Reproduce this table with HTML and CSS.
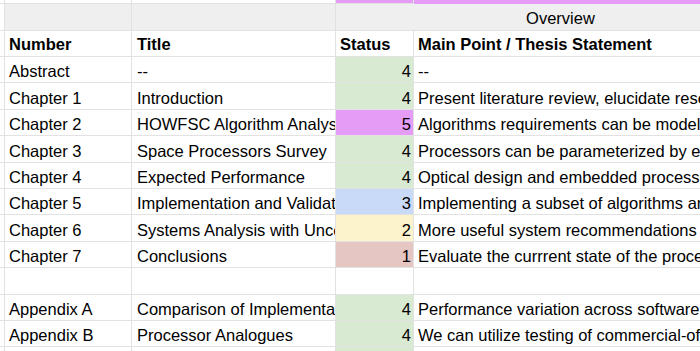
FILE: index.html
```html
<!DOCTYPE html>
<html>
<head>
<meta charset="utf-8">
<link rel="stylesheet" href="styles.css">
</head>
<body>
<div class="sheet">
  <div class="c edge r-top"></div><div class="c r-top"></div><div class="c r-top"></div><div class="c r-top purple"></div><div class="c r-top purple title-top"><span>Dissertation Chapter Summary</span></div>

  <div class="c edge"></div><div class="c band"></div><div class="c band"></div><div class="c band overview">Overview</div>

  <div class="c edge"></div><div class="c b">Number</div><div class="c b">Title</div><div class="c b">Status</div><div class="c b">Main Point / Thesis Statement</div>

  <div class="c edge"></div><div class="c">Abstract</div><div class="c">--</div><div class="c num green">4</div><div class="c">--</div>
  <div class="c edge"></div><div class="c">Chapter 1</div><div class="c">Introduction</div><div class="c num green">4</div><div class="c">Present literature review, elucidate research questions and motivation</div>
  <div class="c edge"></div><div class="c">Chapter 2</div><div class="c">HOWFSC Algorithm Analysis</div><div class="c num purple">5</div><div class="c">Algorithms requirements can be modeled and quantified</div>
  <div class="c edge"></div><div class="c">Chapter 3</div><div class="c">Space Processors Survey</div><div class="c num green">4</div><div class="c">Processors can be parameterized by efficiency and throughput</div>
  <div class="c edge"></div><div class="c">Chapter 4</div><div class="c">Expected Performance</div><div class="c num green">4</div><div class="c">Optical design and embedded processors drive performance</div>
  <div class="c edge"></div><div class="c">Chapter 5</div><div class="c">Implementation and Validation</div><div class="c num blue">3</div><div class="c">Implementing a subset of algorithms and validating models</div>
  <div class="c edge"></div><div class="c">Chapter 6</div><div class="c">Systems Analysis with Uncertainty</div><div class="c num yellow">2</div><div class="c">More useful system recommendations with uncertainty</div>
  <div class="c edge"></div><div class="c">Chapter 7</div><div class="c">Conclusions</div><div class="c num red">1</div><div class="c">Evaluate the currrent state of the processor landscape</div>
  <div class="c edge"></div><div class="c"></div><div class="c"></div><div class="c"></div><div class="c"></div>
  <div class="c edge"></div><div class="c">Appendix A</div><div class="c">Comparison of Implementations</div><div class="c num green">4</div><div class="c">Performance variation across software implementations</div>
  <div class="c edge"></div><div class="c">Appendix B</div><div class="c">Processor Analogues</div><div class="c num green">4</div><div class="c">We can utilize testing of commercial-off-the-shelf analogues</div>
  <div class="c edge"></div><div class="c"></div><div class="c"></div><div class="c num green"></div><div class="c"></div>
</div>
</body>
</html>
```

FILE: styles.css
```css
html, body {
  margin: 0;
  padding: 0;
  background: #ffffff;
  overflow: hidden;
}

.sheet {
  display: grid;
  grid-template-columns: 5px 127px 204px 78px 560px;
  grid-template-rows: 4px 27px 26px repeat(11, 26.4px) 20px;
  width: 974px;
  font-family: "Liberation Sans", Arial, sans-serif;
  font-size: 16.5px;
  color: #000000;
}

.c {
  box-sizing: border-box;
  border-right: 1px solid #e2e2e2;
  border-bottom: 1px solid #e2e2e2;
  display: flex;
  align-items: flex-end;
  line-height: 18px;
  padding: 0 3px 2px 4px;
  white-space: nowrap;
  overflow: hidden;
  min-width: 0;
}

.edge {
  padding: 0;
}

.b {
  font-weight: bold;
  padding-bottom: 3px;
}

.num {
  justify-content: flex-end;
  padding-right: 2px;
}

.sheet > .c:nth-child(5n+2) {
  padding-left: 5px;
}

.r-top {
  padding: 0;
}

.title-top {
  justify-content: center;
  align-items: flex-end;
  padding-bottom: 6px;
}

.band {
  background: #efefef;
}

.overview {
  grid-column: span 2;
  justify-content: center;
  padding-right: 192px;
  padding-bottom: 3px;
}

.green { background: #d9ead3; }
.purple { background: #e59cf6; }
.blue { background: #c9daf8; }
.yellow { background: #fcf2cb; }
.red { background: #e6c6c3; }
```
